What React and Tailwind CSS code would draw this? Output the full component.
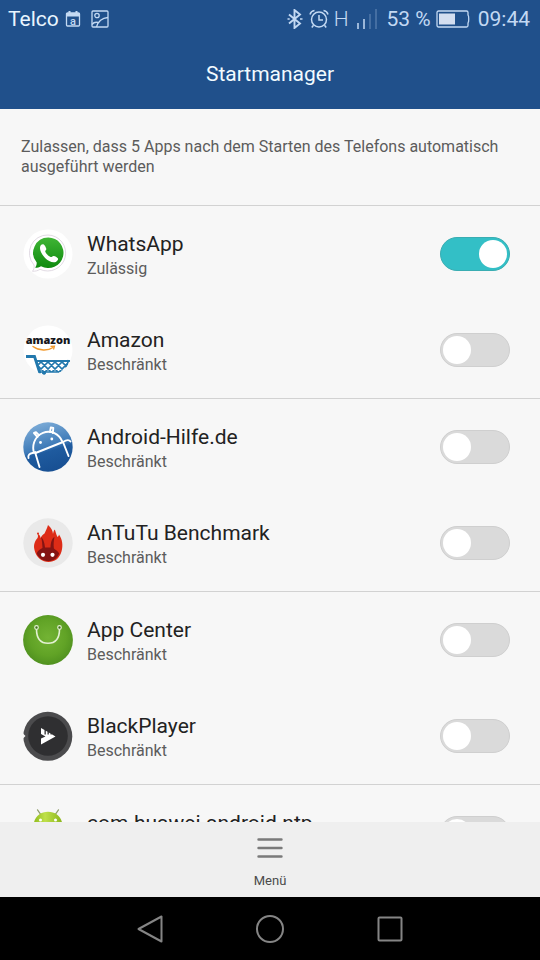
import React, { useState } from 'react';

const WhatsAppIcon = () => (
  <svg viewBox="0 0 50 50" className="w-[50px] h-[50px] shrink-0" aria-hidden="true">
    <defs>
      <linearGradient id="wa" x1="0" y1="0" x2="0" y2="1">
        <stop offset="0" stopColor="#3fb535" />
        <stop offset="1" stopColor="#0f8a0f" />
      </linearGradient>
    </defs>
    <circle cx="25" cy="25" r="24.5" fill="#fff" />
    <path d="M25 6a18 18 0 1 1-8 34.300c-2 1.400-4.500 2-7.500 2 1.400-2 2-3.800 1.500-6.300A18 18 0 0 1 25 6z" fill="#fff" stroke="#e2dbe4" strokeWidth="1" />
    <path d="M25.300 8.500a15.300 15.300 0 1 1-7.300 28.800c-1.800 1-3.700 1.500-5.800 1.500 1-1.700 1.600-3.200 1.500-5.200A15.300 15.300 0 0 1 25.300 8.500z" fill="url(#wa)" />
    <path d="M17.200 17.500c.6-1.800 2.500-2.800 3.800-1.700 1 .9 1.900 2.700 2.300 4 .3 1.300-1.400 1.900-1 3 1 2.300 3 4.200 5.300 5.200 1.300.5 2-1.300 3.200-1 1.500.3 3 1.200 4 2.200.9 1.100-.3 3-2 3.700-3.300 1.200-7.700-.8-10.700-3.900-3.100-3.200-5.900-7.900-4.900-11.500z" fill="#fff" />
  </svg>
);

const AmazonIcon = () => (
  <svg viewBox="0 0 50 50" className="w-[50px] h-[50px] shrink-0" aria-hidden="true">
    <defs>
      <clipPath id="amClip"><circle cx="25" cy="25" r="25" /></clipPath>
      <clipPath id="basket"><path d="M14 35h32l-4 12H17z" /></clipPath>
    </defs>
    <circle cx="25" cy="25" r="24.500" fill="#fff" />
    <text x="25" y="19" textAnchor="middle" fontFamily="'Open Sans', sans-serif" fontWeight="800" fontSize="11" fill="#17171c">amazon</text>
    <path d="M10 21.500c6 4.500 15 4.500 20 1" fill="none" stroke="#f29a2e" strokeWidth="1.500" strokeLinecap="round" />
    <path d="M27.500 21.400l4-.3-1 3.400" fill="none" stroke="#f29a2e" strokeWidth="1.200" />
    <g clipPath="url(#amClip)" stroke="#2278ad" fill="none">
      <path d="M3 31.500h8.500l5.500 17" strokeWidth="2.800" />
      <path d="M13 36h34" strokeWidth="2" />
      <path d="M45.500 35l-3.500 12M16.500 47h25" strokeWidth="1.600" />
      <g clipPath="url(#basket)">
        <path d="M9 35l12 12M16 35l12 12M23 35l12 12M30 35l12 12M37 35l12 12M44 35l12 12M20 35L8 47M27 35L15 47M34 35L22 47M41 35L29 47M48 35L36 47" strokeWidth="1.700" />
      </g>
      <circle cx="21" cy="48" r="1.500" fill="#2278ad" />
      <circle cx="37" cy="48" r="1.500" fill="#2278ad" />
    </g>
  </svg>
);

const AndroidHilfeIcon = () => (
  <svg viewBox="0 0 50 50" className="w-[50px] h-[50px] shrink-0" aria-hidden="true">
    <defs>
      <linearGradient id="ah" x1="0.300" y1="0" x2="0.600" y2="1">
        <stop offset="0" stopColor="#7eadd8" />
        <stop offset="0.500" stopColor="#3f7bb8" />
        <stop offset="0.600" stopColor="#1f5b9f" />
        <stop offset="1" stopColor="#174f92" />
      </linearGradient>
    </defs>
    <circle cx="25" cy="25" r="24.700" fill="url(#ah)" />
    <g fill="none" stroke="#fff" strokeWidth="1.900" strokeLinecap="round" strokeLinejoin="round">
      <path d="M10.500 29C9 20 14 13 20 10.800c8-3 16 1 19.500 9" />
      <path d="M12.500 31L40 20" />
      <path d="M14.500 15l-3.500-4M27 10l.8-4.500M11 11l2-.8 3 3M27.800 5.500l2.500.5-.5 5" />
      <path d="M12 30l4.500 15M40 20l5.500 14" />
      <path d="M5.500 36c-.8-3 1-4.500 4-5l3-.5M40 20c3-2 6-2.500 7.500-.5" />
    </g>
    <circle cx="17.500" cy="20.500" r="1.400" fill="#fff" />
    <circle cx="28.800" cy="17" r="1.400" fill="#fff" />
  </svg>
);

const AntutuIcon = () => (
  <svg viewBox="0 0 50 50" className="w-[50px] h-[50px] shrink-0" aria-hidden="true">
    <circle cx="25" cy="25" r="24.700" fill="#e9e9e9" />
    <path d="M11.500 32c-1.500-6 1-9.500 3-12 .8-1.500.5-3 0-4.500 2 1.200 3 2.800 3 4.500 1-2 2-3.200 4-4.500 1.300-2.800 2.500-5 3.500-8.500 3.500 3 4.800 6 5 9 .4-1.800.5-3 1.800-4.500 1 3 1.500 5 2.700 7.500.8-.5 1.300-1.500 1.500-2.500 3.500 5 4.200 11 2.500 17-2 7-7 10.500-13 10.500s-12.200-4-14-12z" fill="#dd2c17" />
    <path d="M18 19c2 1.500 3.500 5 4 10.500h5.500c.3-6 1.700-9.500 4-10.500-.8 3.500-1.100 7.500-.6 11.500 2 1.500 4.300 3 5.300 5-1.800 5-6.200 7.500-10.700 7.500-5 0-9.800-2.500-11.800-7.500.7-2.300 3.300-4.500 5.800-5.500-.3-4-.3-7.500-1.500-11z" fill="#841413" />
    <circle cx="20" cy="36.800" r="2.100" fill="#fff" />
    <circle cx="29.500" cy="36.800" r="2.100" fill="#fff" />
    <circle cx="15" cy="15.500" r="1" fill="#dd2c17" />
  </svg>
);

const AppCenterIcon = () => (
  <svg viewBox="0 0 50 50" className="w-[50px] h-[50px] shrink-0" aria-hidden="true">
    <defs>
      <radialGradient id="ac" cx="0.500" cy="0.450" r="0.600">
        <stop offset="0" stopColor="#73b334" />
        <stop offset="0.600" stopColor="#61a326" />
        <stop offset="1" stopColor="#4c8d1e" />
      </radialGradient>
    </defs>
    <circle cx="25" cy="25" r="24.900" fill="url(#ac)" />
    <path d="M13.500 14c0 10 4.500 14.300 11.500 14.300S36.500 24 36.500 14" fill="none" stroke="#e3f0d2" strokeWidth="1.600" />
    <circle cx="13.500" cy="12.500" r="1.800" fill="#3f701b" stroke="#e3f0d2" strokeWidth="1.200" />
    <circle cx="36.500" cy="12.500" r="1.800" fill="#3f701b" stroke="#e3f0d2" strokeWidth="1.200" />
  </svg>
);

const BlackPlayerIcon = () => (
  <svg viewBox="0 0 50 50" className="w-[50px] h-[50px] shrink-0" aria-hidden="true">
    <circle cx="24.800" cy="25.300" r="24.500" fill="#4b4b4d" />
    <circle cx="25" cy="25" r="19.800" fill="#2f2f31" />
    <path d="M0 22.500l2.500 2.500L0 27.500z" fill="#f7f7f7" />
    <path d="M18 17l3.500 2v4.500h1.300v-3.800l1.700 1v2.800h1.300v-2l1.700 1v1h1.300v-.2l3.700 2.200L18 33.500V27.500l4.500-2-4.500-2.500z" fill="#fff" />
  </svg>
);

const AndroidIcon = () => (
  <svg viewBox="0 0 50 50" className="w-[50px] h-[50px] shrink-0" aria-hidden="true">
    <defs>
      <linearGradient id="an" x1="0" y1="0" x2="1" y2="0">
        <stop offset="0" stopColor="#8fbb1c" />
        <stop offset="0.400" stopColor="#bfe04a" />
        <stop offset="1" stopColor="#8ab51a" />
      </linearGradient>
    </defs>
    <path d="M14.500 1.800l3.500 5M35.500 1.800l-3.500 5" stroke="#8d9c69" strokeWidth="1.200" strokeLinecap="round" />
    <path d="M10.500 17.500C11 9 17 3.800 25 3.800S39 9 39.500 17.500z" fill="url(#an)" />
    <circle cx="17.500" cy="12" r="1.500" fill="#fff" />
    <circle cx="32.500" cy="12" r="1.500" fill="#fff" />
    <path d="M10.500 19h29v19h-29z" fill="url(#an)" />
  </svg>
);

const appGroups = [
  [
    { name: 'WhatsApp', icon: WhatsAppIcon, allowed: true },
    { name: 'Amazon', icon: AmazonIcon, allowed: false },
  ],
  [
    { name: 'Android-Hilfe.de', icon: AndroidHilfeIcon, allowed: false },
    { name: 'AnTuTu Benchmark', icon: AntutuIcon, allowed: false },
  ],
  [
    { name: 'App Center', icon: AppCenterIcon, allowed: false },
    { name: 'BlackPlayer', icon: BlackPlayerIcon, allowed: false },
  ],
  [
    { name: 'com.huawei.android.ntp', icon: AndroidIcon, allowed: false },
  ],
];

const StatusBar = () => (
  <div className="flex items-center justify-between h-[38px] pl-2 pr-[10px] text-[21px] leading-6 text-[#c3d9f3]">
    <div className="flex items-center">
      <span className="text-[#e9f5ff]">Telco</span>
      <svg viewBox="0 0 16 16" className="w-4 h-4 ml-[6px]" aria-hidden="true">
        <path d="M2.500 2h11a1 1 0 0 1 1 1v11a1 1 0 0 1-1 1h-11a1 1 0 0 1-1-1V3a1 1 0 0 1 1-1z" fill="none" stroke="currentColor" strokeWidth="1.300" />
        <path d="M1 2h14v3.500H1zM3.500 0h2v3h-2zM10.500 0h2v3h-2z" fill="currentColor" />
        <text x="8" y="13.500" textAnchor="middle" fontSize="11" fontWeight="500" fill="currentColor">a</text>
      </svg>
      <svg viewBox="0 0 18 18" className="w-[18px] h-[18px] ml-[10px]" fill="none" stroke="currentColor" strokeWidth="1.300" aria-hidden="true">
        <rect x="1" y="1" width="16" height="16" rx="1" />
        <circle cx="6" cy="5.500" r="2.200" />
        <path d="M1 14.500c1.500-2 4-2.500 6-2M5.500 17C7 11.500 11 8 17 7.500" />
      </svg>
    </div>
    <div className="flex items-center">
      <svg viewBox="0 0 16 20" className="w-4 h-5 mr-[6px]" fill="none" stroke="currentColor" strokeWidth="1.900" aria-hidden="true">
        <path d="M2 5.500l11 9-5.500 4.500V1L13 5.500l-11 9" />
        <path d="M.5 10h2.200M13 10h2.500" strokeWidth="1.500" />
      </svg>
      <svg viewBox="0 0 20 20" className="w-5 h-5 mr-[5px]" fill="none" stroke="currentColor" strokeWidth="1.500" aria-hidden="true">
        <circle cx="10" cy="10.500" r="7.500" />
        <path d="M10 6v5h4M1 5.500C1.500 3.500 3.500 1.800 5.500 1.500M19 5.500C18.500 3.500 16.500 1.800 14.500 1.500M4.500 16.300L2.800 18.500M15.500 16.300l1.700 2.200" />
      </svg>
      <span className="mr-2 font-light">H</span>
      <svg viewBox="0 0 20 20" className="w-5 h-5 mr-[10px]" fill="none" stroke="currentColor" strokeWidth="1.500" aria-hidden="true">
        <path d="M1 14v6M7 10v10" />
        <path d="M13 5v15M19 0v20" opacity="0.300" />
      </svg>
      <span>53 %</span>
      <svg viewBox="0 0 34 18" className="w-[34px] h-[18px] ml-[5px] mr-[8px]" aria-hidden="true">
        <path d="M2.500 1h28a1.500 1.500 0 0 1 1.500 1.500V5c1 .8 1 7.200 0 8v2.500a1.500 1.500 0 0 1-1.500 1.500h-28A1.500 1.500 0 0 1 1 15.500v-13A1.500 1.500 0 0 1 2.500 1z" fill="none" stroke="currentColor" strokeWidth="1.300" />
        <rect x="3" y="3.500" width="16" height="11" fill="#d3def0" />
      </svg>
      <span>09:44</span>
    </div>
  </div>
);

const AppRow = ({ app }) => {
  const [allowed, setAllowed] = useState(app.allowed);
  const Icon = app.icon;

  return (
    <label className="flex items-center h-24 pl-[23px] pr-[30px]">
      <Icon />
      <span className="flex-1 min-w-0 ml-[14px]">
        <span className="block text-[21px] leading-[30px] text-[#222222]">{app.name}</span>
        <span className="block text-[16px] leading-5 text-[#5c5c5c]">{allowed ? 'Zulässig' : 'Beschränkt'}</span>
      </span>
      <input
        type="checkbox"
        checked={allowed}
        onChange={() => setAllowed(!allowed)}
        className="appearance-none flex items-center shrink-0 w-[70px] h-[34px] px-[2px] rounded-full border border-[#cfcfcf] bg-[#dadada] before:block before:w-7 before:h-7 before:rounded-full before:bg-white checked:justify-end checked:bg-[#33bfc6] checked:border-[#3aadb2]"
      />
    </label>
  );
};

const App = () => {
  return (
    <div className="flex flex-col h-screen bg-[#f7f7f7] font-['Roboto',sans-serif]">
      {/* Header */}
      <header className="shrink-0 bg-[#20508b]">
        <StatusBar />
        <h1 className="h-[71px] text-center text-[21px] leading-[72px] text-[#f2fbff]">Startmanager</h1>
      </header>

      {/* App list */}
      <main className="flex-1 min-h-0 overflow-y-auto [scrollbar-width:none]">
        <p className="px-[21px] py-7 text-[16px] leading-5 text-[#5c5c5c]">
          Zulassen, dass 5 Apps nach dem Starten des Telefons automatisch ausgeführt werden
        </p>
        {appGroups.map((group) => (
          <div key={group[0].name} className="border-t border-[#d2d2d2]">
            {group.map((app) => (
              <AppRow key={app.name} app={app} />
            ))}
          </div>
        ))}
      </main>

      {/* Menu */}
      <div className="flex justify-center shrink-0 h-[75px] bg-[#efefef]">
        <button type="button" className="flex flex-col items-center pt-[15px] px-6 text-[13px] leading-5 text-[#4a4a4a]">
          <svg viewBox="0 0 26 22" className="w-[26px] h-[22px] mb-3" stroke="#7a7a7a" strokeWidth="2.400" strokeLinecap="round" aria-hidden="true">
            <path d="M1.500 2.500h23M1.500 11h23M1.500 19.500h23" />
          </svg>
          Menü
        </button>
      </div>

      {/* Navigation keys */}
      <nav className="flex items-center justify-center gap-[90px] shrink-0 h-[63px] bg-black text-[#858585]">
        <button type="button" aria-label="Zurück">
          <svg viewBox="0 0 30 30" className="w-[30px] h-[30px]" fill="none" stroke="currentColor" strokeWidth="2" strokeLinejoin="round" aria-hidden="true">
            <path d="M26.500 2.500v25L3.500 15z" />
          </svg>
        </button>
        <button type="button" aria-label="Startseite">
          <svg viewBox="0 0 30 30" className="w-[30px] h-[30px]" fill="none" stroke="currentColor" strokeWidth="2" aria-hidden="true">
            <circle cx="15" cy="15" r="13" />
          </svg>
        </button>
        <button type="button" aria-label="Letzte Apps">
          <svg viewBox="0 0 30 30" className="w-[30px] h-[30px]" fill="none" stroke="currentColor" strokeWidth="2" strokeLinejoin="round" aria-hidden="true">
            <rect x="3.500" y="3.500" width="23" height="23" rx="1" />
          </svg>
        </button>
      </nav>
    </div>
  );
};

export default App;
